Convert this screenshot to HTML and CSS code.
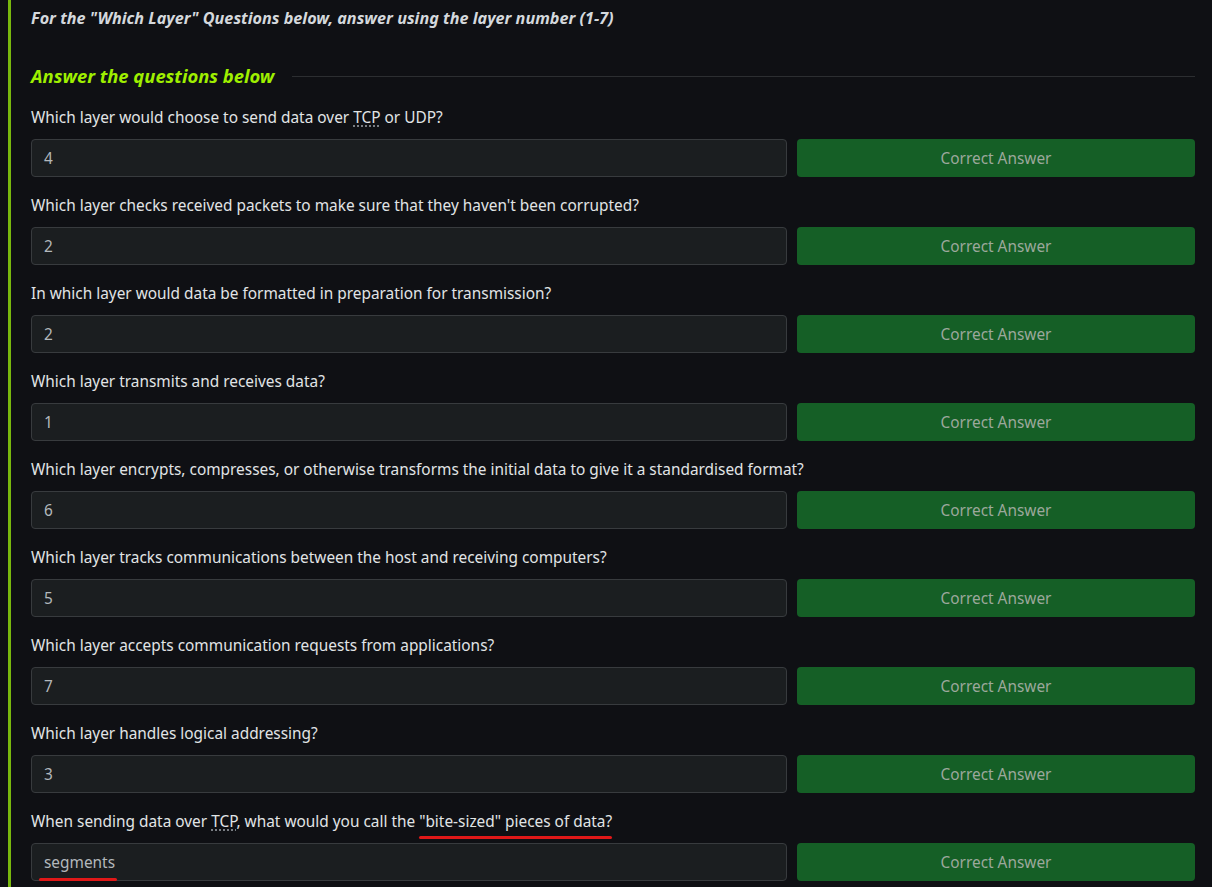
FILE: index.html
```html
<!DOCTYPE html>
<html lang="en">
<head>
<meta charset="utf-8">
<title>Answer the questions below</title>
<link rel="stylesheet" href="styles.css">
</head>
<body>
<div class="task">
  <p class="note">For the "Which Layer" Questions below, answer using the layer number (1-7)</p>
  <div class="heading-row">
    <h3 class="heading">Answer the questions below</h3>
    <div class="rule"></div>
  </div>

  <div class="q">
    <p class="label">Which layer would choose to send data over <abbr>TCP</abbr> or UDP?</p>
    <div class="answer-row"><div class="input">4</div><button class="btn">Correct Answer</button></div>
  </div>
  <div class="q">
    <p class="label">Which layer checks received packets to make sure that they haven't been corrupted?</p>
    <div class="answer-row"><div class="input">2</div><button class="btn">Correct Answer</button></div>
  </div>
  <div class="q">
    <p class="label">In which layer would data be formatted in preparation for transmission?</p>
    <div class="answer-row"><div class="input">2</div><button class="btn">Correct Answer</button></div>
  </div>
  <div class="q">
    <p class="label">Which layer transmits and receives data?</p>
    <div class="answer-row"><div class="input">1</div><button class="btn">Correct Answer</button></div>
  </div>
  <div class="q">
    <p class="label">Which layer encrypts, compresses, or otherwise transforms the initial data to give it a standardised format?</p>
    <div class="answer-row"><div class="input">6</div><button class="btn">Correct Answer</button></div>
  </div>
  <div class="q">
    <p class="label">Which layer tracks communications between the host and receiving computers?</p>
    <div class="answer-row"><div class="input">5</div><button class="btn">Correct Answer</button></div>
  </div>
  <div class="q">
    <p class="label">Which layer accepts communication requests from applications?</p>
    <div class="answer-row"><div class="input">7</div><button class="btn">Correct Answer</button></div>
  </div>
  <div class="q">
    <p class="label">Which layer handles logical addressing?</p>
    <div class="answer-row"><div class="input">3</div><button class="btn">Correct Answer</button></div>
  </div>
  <div class="q">
    <p class="label">When sending data over <abbr>TCP</abbr>, what would you call the <span class="mark">"bite-sized" pieces of data?</span></p>
    <div class="answer-row"><div class="input"><span class="mark mark-in">segments</span></div><button class="btn">Correct Answer</button></div>
  </div>
</div>
</body>
</html>
```

FILE: styles.css
```css
html, body {
  margin: 0;
  padding: 0;
  background: #0f1014;
}
body {
  font-family: "Noto Sans", "Open Sans", sans-serif;
  font-size: 15.4px;
  color: #dfe3e6;
}
.task {
  margin-left: 8px;
  border-left: 3px solid #79b80e;
  padding: 7px 17px 0 20px;
  min-height: 887px;
  box-sizing: border-box;
}
.note {
  margin: 0;
  line-height: 22px;
  font-size: 16.2px;
  font-weight: 700;
  font-style: italic;
  color: #d4d8dc;
}
.heading-row {
  display: flex;
  align-items: center;
  gap: 18px;
  margin-top: 35px;
  height: 24px;
}
.heading {
  margin: 0;
  font-size: 18.4px;
  font-weight: 700;
  font-style: italic;
  color: #9fef00;
  line-height: 24px;
  white-space: nowrap;
}
.rule {
  flex: 1;
  height: 1px;
  background: #2c2e31;
}
.q {
  margin-top: 18px;
}
.q + .q {
  margin-top: 17px;
}
.label {
  margin: 0 0 10px;
  padding-top: 1px;
  line-height: 22px;
  color: #e1e4e6;
}
abbr {
  text-decoration: underline dotted #9aa0a6;
  text-underline-offset: 3px;
}
.answer-row {
  display: flex;
  gap: 10px;
  height: 38px;
}
.input {
  flex: 0 0 756px;
  box-sizing: border-box;
  border: 1px solid #383b3e;
  border-radius: 4px;
  background: #1b1e20;
  color: #b3b8bc;
  padding: 0 12px;
  display: flex;
  align-items: center;
  font-family: "Noto Sans", "Open Sans", sans-serif;
  font-size: 15.4px;
}
.btn {
  flex: 1;
  border: 0;
  border-radius: 4px;
  background: #155f26;
  color: #9ca89c;
  font-family: "Noto Sans", "Open Sans", sans-serif;
  font-size: 15.4px;
  padding: 0;
}
.mark {
  position: relative;
}
.mark::after {
  content: "";
  position: absolute;
  left: 0;
  right: 0;
  bottom: -7px;
  height: 3px;
  border-radius: 2px;
  background: #e01818;
}
.mark-in::after {
  left: -5px;
  right: -2px;
  bottom: -8px;
}
```
